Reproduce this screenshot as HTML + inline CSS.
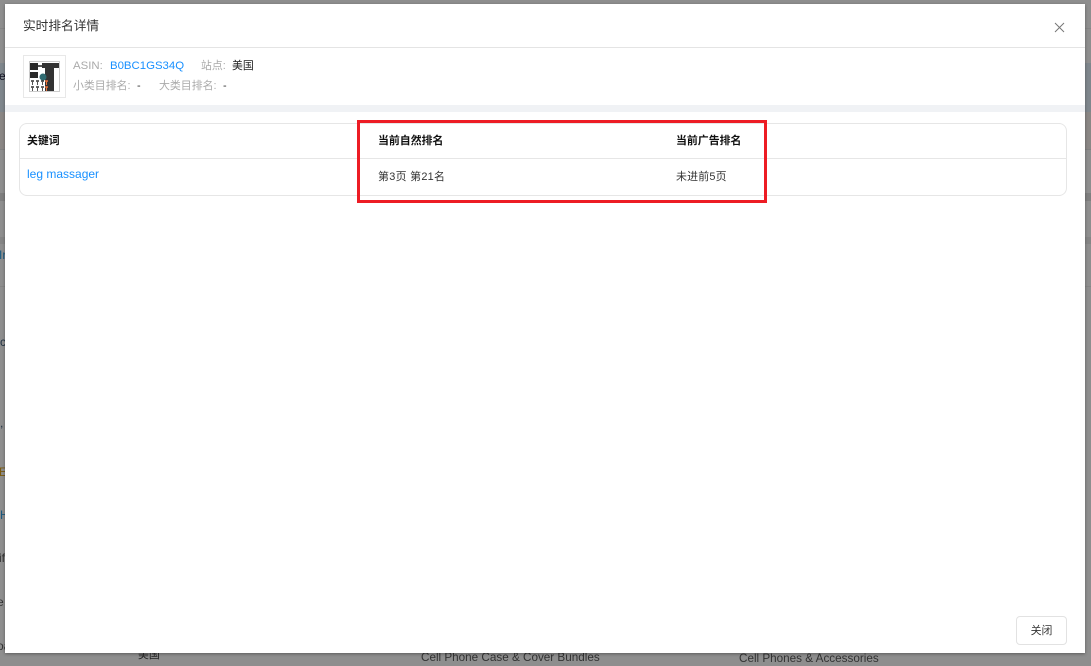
<!DOCTYPE html>
<html><head><meta charset="utf-8"><style>
html,body{margin:0;padding:0;width:1091px;height:662px;overflow:hidden;background:#8e8e8e;font-family:"Liberation Sans","Noto Sans CJK SC",sans-serif;font-size:10.91px;color:#333}
.a{position:absolute;white-space:nowrap;line-height:14px}
.bg{position:absolute;left:0;width:1091px}
.blue{color:#1890ff}.gr{color:#aaa}
.lat{font-size:11.4px}
</style></head><body>
<div class="bg" style="top:28px;height:1px;background:#858585"></div>
<div class="bg" style="top:63px;height:49px;background:#7f868c"></div>
<div class="bg" style="top:112px;height:37px;background:#8a8785"></div>
<div class="bg" style="top:149px;height:1px;background:#808080"></div>
<div class="bg" style="top:193px;height:8px;background:#7f7f7f"></div>
<div class="bg" style="top:237px;height:7px;background:#858585"></div>
<div class="bg" style="top:286px;height:1px;background:#858585"></div>
<div class="a" style="left:-1px;top:69px;color:#112;font-size:12px">e</div>
<div class="a" style="left:-1px;top:248px;color:#1a5a80;font-size:12px">Ir</div>
<div class="a" style="left:0;top:335px;color:#234;font-size:12px">c</div>
<div class="a" style="left:0;top:416px;color:#234;font-size:12px">,</div>
<div class="a" style="left:-1px;top:465px;color:#7a5a10;font-size:12px">E</div>
<div class="a" style="left:0;top:508px;color:#1a5a80;font-size:12px">H</div>
<div class="a" style="left:-1px;top:551px;color:#333;font-size:12px">if</div>
<div class="a" style="left:-3px;top:595px;color:#333;font-size:12px">e</div>
<div class="a" style="left:-3px;top:639px;color:#333;font-size:12px">oa</div>
<div class="a" style="left:138px;top:648px;color:#222;">美国</div>
<div class="a" style="left:421px;top:651px;color:#333;font-size:11.7px">Cell Phone Case &amp; Cover Bundles</div>
<div class="a" style="left:739px;top:652px;color:#333;font-size:11.7px">Cell Phones &amp; Accessories</div>

<div style="position:absolute;left:5px;top:4px;width:1080px;height:649px;background:#fff;box-shadow:0 1px 3px rgba(0,0,0,.35)"></div>
<div class="a" style="left:23px;top:18px;font-size:12.7px;line-height:17px;color:#333">实时排名详情</div>
<svg style="position:absolute;left:1054px;top:22px" width="11" height="11" viewBox="0 0 11 11"><path d="M1 1L10 10M10 1L1 10" stroke="#777" stroke-width="1" fill="none"/></svg>
<div style="position:absolute;left:5px;top:47px;width:1080px;height:1px;background:#e4e4e4"></div>

<div style="position:absolute;left:23px;top:55px;width:41px;height:41px;border:1px solid #e8e8e8;background:#fff"></div>
<svg style="position:absolute;left:29px;top:61px;filter:blur(.35px)" width="31" height="31" viewBox="0 0 31 31">
<rect x=".5" y=".5" width="30" height="30" fill="#fff" stroke="#ccc"/>
<path d="M13 2h17v5h-5v23h-9V7h-3z" fill="#333"/>
<path d="M1 2h8v7H1zM1 11h8v6H1z" fill="#2a2a2a"/>
<path d="M9 4h4v2H9z" fill="#555"/>
<circle cx="14" cy="16" r="3.500" fill="#2f6a70"/>
<path d="M2 20h3M7 20h3M12 20h3M2 26h3M7 26h3M12 26h3" stroke="#333" stroke-width="1.500"/>
<path d="M3.500 20v4M8.500 20v4M13.500 20v4M3.500 26v4M8.500 26v4M13.500 26v4" stroke="#555"/>
<path d="M16 20h3M16 26h3" stroke="#e8703a" stroke-width="1.500"/>
<path d="M17.500 20v4M17.500 26v4" stroke="#e8703a"/>
</svg>

<div class="a gr lat" style="left:73px;top:59px;">ASIN:</div>
<div class="a blue lat" style="left:110px;top:59px;">B0BC1GS34Q</div>
<div class="a gr" style="left:201px;top:59px">站点:</div>
<div class="a" style="left:232px;top:59px;color:#222">美国</div>
<div class="a gr" style="left:73px;top:79px">小类目排名:</div>
<div class="a" style="left:137px;top:79px">-</div>
<div class="a gr" style="left:159px;top:79px">大类目排名:</div>
<div class="a" style="left:223px;top:79px">-</div>
<div style="position:absolute;left:5px;top:105px;width:1080px;height:7px;background:#f0f2f5"></div>

<div style="position:absolute;left:19px;top:123px;width:1046px;height:71px;border:1px solid #e6e6e6;border-radius:8px"></div>
<div style="position:absolute;left:20px;top:158px;width:1046px;height:1px;background:#e6e6e6"></div>
<div class="a" style="left:27px;top:134px;font-weight:bold;color:#111">关键词</div>
<div class="a" style="left:378px;top:134px;font-weight:bold;color:#111">当前自然排名</div>
<div class="a" style="left:676px;top:134px;font-weight:bold;color:#111">当前广告排名</div>
<div class="a blue" style="left:27px;top:167px;font-size:12px">leg massager</div>
<div class="a" style="left:378px;top:170px;letter-spacing:.3px">第3页 第21名</div>
<div class="a" style="left:676px;top:170px;letter-spacing:.2px">未进前5页</div>

<div style="position:absolute;left:357px;top:120px;width:404px;height:77px;border:3px solid #ed1c24"></div>

<div style="position:absolute;left:1016px;top:616px;width:49px;height:27px;border:1px solid #e2e2e2;border-radius:4px;background:#fff;text-align:center;line-height:28px;color:#333">关闭</div>
</body></html>
